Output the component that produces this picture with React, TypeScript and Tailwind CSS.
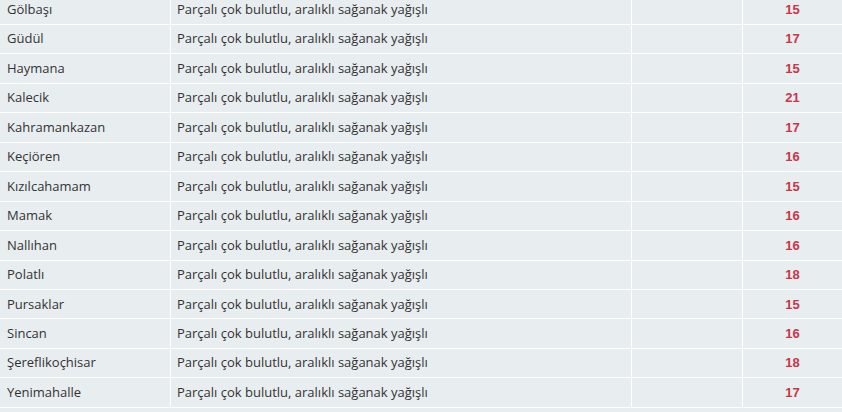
const rows: [string, number][] = [
  ['Gölbaşı', 15],
  ['Güdül', 17],
  ['Haymana', 15],
  ['Kalecik', 21],
  ['Kahramankazan', 17],
  ['Keçiören', 16],
  ['Kızılcahamam', 15],
  ['Mamak', 16],
  ['Nallıhan', 16],
  ['Polatlı', 18],
  ['Pursaklar', 15],
  ['Sincan', 16],
  ['Şereflikoçhisar', 18],
  ['Yenimahalle', 17],
]

const desc = 'Parçalı çok bulutlu, aralıklı sağanak yağışlı'

export default function App() {
  return (
    <div className="w-[842px] h-[412px] overflow-hidden bg-[#e8edf0] font-['Open_Sans',sans-serif]">
      <div className="-mt-[4.5px] flex flex-col">
        {rows.map(([name, temp]) => (
          <div
            key={name}
            className="grid grid-cols-[171px_461px_111px_1fr] h-[29.46px] border-b border-white text-[13px] text-[#333]"
          >
            <div className="flex items-center pl-[7px] border-r border-white">{name}</div>
            <div className="flex items-center pl-[6px] border-r border-white">{desc}</div>
            <div className="border-r border-white" />
            <div className="flex items-center justify-center font-['Liberation_Sans',sans-serif] font-bold text-[13px] text-[#c8364a]">
              {temp}
            </div>
          </div>
        ))}
      </div>
    </div>
  )
}
